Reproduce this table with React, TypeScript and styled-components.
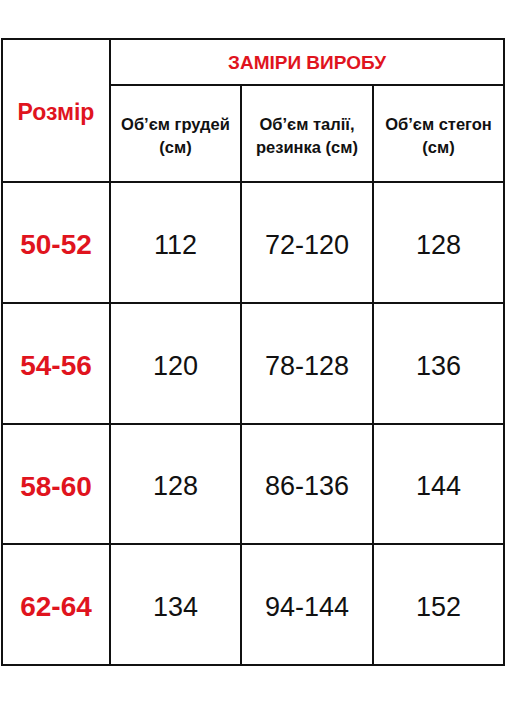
import { Fragment } from "react";
import styled, { createGlobalStyle } from "styled-components";

const GlobalStyle = createGlobalStyle`
  html, body {
    margin: 0;
    padding: 0;
    background: #fff;
  }
  body {
    font-family: "Liberation Sans", Arial, sans-serif;
  }
`;

const Page = styled.div`
  width: 506px;
  height: 704px;
  padding: 38px 0 0 1px;
  box-sizing: border-box;
`;

const Grid = styled.div`
  display: grid;
  grid-template-columns: 106px 129px 130px 129px;
  grid-template-rows: 44px 95px 119px 119px 118px 119px;
  gap: 2px;
  padding: 2px;
  width: fit-content;
  background: #111;
`;

const Cell = styled.div<{ $col?: string; $row?: string }>`
  background: #fff;
  display: flex;
  align-items: center;
  justify-content: center;
  text-align: center;
  grid-column: ${(p) => p.$col ?? "auto"};
  grid-row: ${(p) => p.$row ?? "auto"};
`;

const SizeTitle = styled.span`
  color: #e0141e;
  font-weight: 700;
  font-size: 23px;
  margin-top: 4px;
`;

const GroupTitle = styled.span`
  color: #e0141e;
  font-weight: 700;
  font-size: 19px;
  margin-top: 2px;
`;

const ColTitle = styled.span`
  color: #111;
  font-weight: 700;
  font-size: 16.5px;
  line-height: 23px;
  margin-top: 4px;
`;

const SizeValue = styled.span`
  color: #e0141e;
  font-weight: 700;
  font-size: 28px;
  margin-top: 5px;
`;

const Value = styled.span`
  color: #111;
  font-size: 27px;
  margin-top: 5px;
`;

const rows = [
  { size: "50-52", chest: "112", waist: "72-120", hips: "128" },
  { size: "54-56", chest: "120", waist: "78-128", hips: "136" },
  { size: "58-60", chest: "128", waist: "86-136", hips: "144" },
  { size: "62-64", chest: "134", waist: "94-144", hips: "152" },
];

const App = () => {
  return (
    <>
      <GlobalStyle />
      <Page>
        <Grid>
          <Cell $col="1" $row="1 / span 2">
            <SizeTitle>Розмір</SizeTitle>
          </Cell>
          <Cell $col="2 / span 3" $row="1">
            <GroupTitle>ЗАМІРИ ВИРОБУ</GroupTitle>
          </Cell>
          <Cell>
            <ColTitle>
              Об’єм грудей
              <br />
              (см)
            </ColTitle>
          </Cell>
          <Cell>
            <ColTitle>
              Об’єм талії,
              <br />
              резинка (см)
            </ColTitle>
          </Cell>
          <Cell>
            <ColTitle>
              Об’єм стегон
              <br />
              (см)
            </ColTitle>
          </Cell>
          {rows.map((r) => (
            <Fragment key={r.size}>
              <Cell>
                <SizeValue>{r.size}</SizeValue>
              </Cell>
              <Cell>
                <Value>{r.chest}</Value>
              </Cell>
              <Cell>
                <Value>{r.waist}</Value>
              </Cell>
              <Cell>
                <Value>{r.hips}</Value>
              </Cell>
            </Fragment>
          ))}
        </Grid>
      </Page>
    </>
  );
};

export default App;
